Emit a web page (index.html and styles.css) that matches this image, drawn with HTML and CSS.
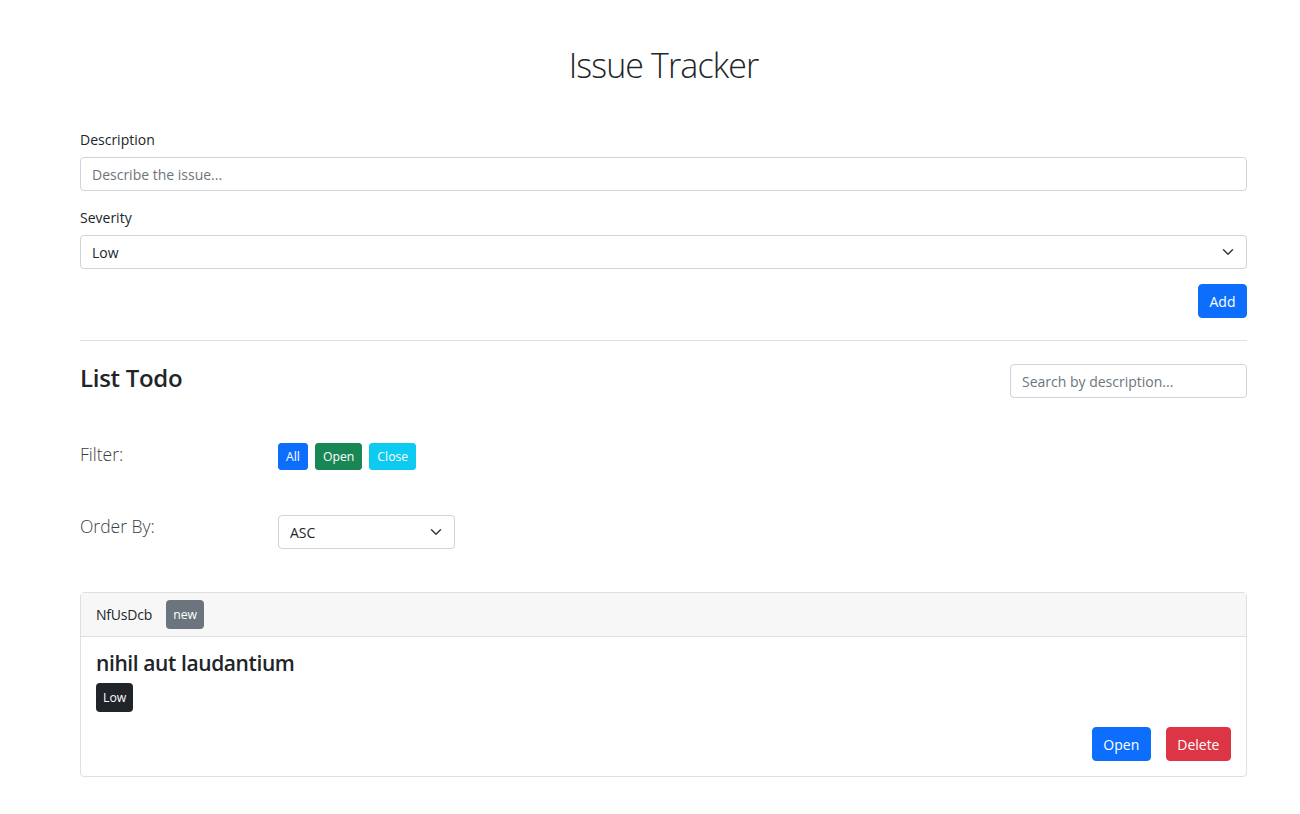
FILE: index.html
```html
<!DOCTYPE html>
<html lang="en">
<head>
<meta charset="utf-8">
<title>Issue Tracker</title>
<link rel="stylesheet" href="styles.css">
</head>
<body>
<div class="container">
  <h1 class="title">Issue Tracker</h1>

  <form class="issue-form">
    <div class="field">
      <label class="form-label" for="desc">Description</label>
      <input class="form-control" id="desc" type="text" placeholder="Describe the issue...">
    </div>
    <div class="field">
      <label class="form-label" for="sev">Severity</label>
      <div class="select-wrap">
        <select class="form-select" id="sev">
          <option>Low</option>
          <option>Medium</option>
          <option>High</option>
        </select>
        <svg class="chevron" viewBox="0 0 16 16" width="16" height="12"><path d="M2 5l6 6 6-6" fill="none" stroke="#343a40" stroke-width="2" stroke-linecap="round" stroke-linejoin="round"/></svg>
      </div>
    </div>
    <div class="form-actions">
      <button type="button" class="btn btn-primary">Add</button>
    </div>
  </form>

  <hr class="divider">

  <div class="list-head">
    <h3 class="list-title">List Todo</h3>
    <input class="form-control search" type="text" placeholder="Search by description...">
  </div>

  <div class="opt-row">
    <div class="opt-label">Filter:</div>
    <div class="opt-control filters">
      <button type="button" class="btn btn-sm btn-primary">All</button>
      <button type="button" class="btn btn-sm btn-success">Open</button>
      <button type="button" class="btn btn-sm btn-info">Close</button>
    </div>
  </div>

  <div class="opt-row">
    <div class="opt-label">Order By:</div>
    <div class="opt-control">
      <div class="select-wrap order">
        <select class="form-select">
          <option>ASC</option>
          <option>DESC</option>
        </select>
        <svg class="chevron" viewBox="0 0 16 16" width="16" height="12"><path d="M2 5l6 6 6-6" fill="none" stroke="#343a40" stroke-width="2" stroke-linecap="round" stroke-linejoin="round"/></svg>
      </div>
    </div>
  </div>

  <div class="card">
    <div class="card-header">
      <span class="issue-id">NfUsDcb</span>
      <span class="badge badge-secondary">new</span>
    </div>
    <div class="card-body">
      <h4 class="card-title">nihil aut laudantium</h4>
      <span class="badge badge-dark">Low</span>
      <div class="card-actions">
        <button type="button" class="btn btn-primary">Open</button>
        <button type="button" class="btn btn-danger">Delete</button>
      </div>
    </div>
  </div>
</div>
</body>
</html>
```

FILE: styles.css
```css
* { box-sizing: border-box; }

html { font-size: 14px; }

body {
  margin: 0;
  font-family: "Open Sans", "Noto Sans", sans-serif;
  font-size: 14px;
  line-height: 1.5;
  color: #212529;
  background: #fff;
}

.container {
  width: 1167px;
  margin-left: 80px;
  padding-top: 44px;
  padding-bottom: 38px;
}

.title {
  margin: 0 0 43px;
  text-align: center;
  font-size: 34px;
  font-weight: 300;
  line-height: 42px;
  letter-spacing: -0.9px;
}

.field { margin-bottom: 16px; }

.form-label {
  display: block;
  margin-bottom: 7px;
  font-size: 14px;
}

.form-control,
.form-select {
  display: block;
  width: 100%;
  height: 34px;
  padding: 5px 11px;
  font-family: inherit;
  font-size: 14px;
  color: #212529;
  background: #fff;
  border: 1px solid #ced4da;
  border-radius: 4px;
  outline: none;
}

.form-control::placeholder { color: #6c757d; }

.form-select {
  appearance: none;
  -webkit-appearance: none;
  padding-right: 36px;
}

.select-wrap { position: relative; }

.chevron {
  position: absolute;
  right: 11px;
  top: 11px;
  pointer-events: none;
}

.form-actions {
  display: flex;
  justify-content: flex-end;
  margin-top: -1px;
}

.btn {
  display: inline-block;
  font-family: inherit;
  font-size: 14px;
  line-height: 21px;
  padding: 5.5px 10.5px;
  border: 1px solid transparent;
  border-radius: 4px;
  color: #fff;
  cursor: pointer;
}

.btn-sm {
  font-size: 12.25px;
  line-height: 18px;
  padding: 3.5px 7px;
  border-radius: 3px;
}

.btn-primary { background: #0d6efd; border-color: #0d6efd; }
.btn-success { background: #198754; border-color: #198754; }
.btn-info { background: #0dcaf0; border-color: #0dcaf0; }
.btn-danger { background: #dc3545; border-color: #dc3545; }

.divider {
  margin: 22px 0 23px;
  border: 0;
  border-top: 1px solid #dfe0e1;
}

.list-head {
  display: flex;
  align-items: center;
  justify-content: space-between;
}

.list-title {
  margin: 0 0 5px;
  font-size: 24px;
  font-weight: 600;
  line-height: 1.2;
  letter-spacing: -0.3px;
}

.search { width: 237px; }

.opt-row {
  display: flex;
  align-items: flex-start;
  margin-top: 43px;
}

.opt-label {
  width: 198px;
  font-size: 17.5px;
  font-weight: 300;
  line-height: 26px;
  color: #3a3f44;
}

.filters {
  display: flex;
  gap: 7px;
  padding-top: 2px;
}

.order { width: 177px; padding-top: 2px; }
.order .chevron { top: 13px; }

.card {
  margin-top: 43px;
  border: 1px solid #dfdfdf;
  border-radius: 4px;
}

.card-header {
  display: flex;
  align-items: center;
  gap: 14px;
  padding: 7px 15px;
  background: #f7f7f7;
  border-bottom: 1px solid #dfdfdf;
}

.issue-id { font-size: 14px; letter-spacing: -0.2px; }

.badge {
  display: inline-block;
  font-size: 12.25px;
  line-height: 18px;
  padding: 5.5px 7px;
  color: #fff;
  border-radius: 4px;
}

.badge-secondary { background: #6c757d; }
.badge-dark { background: #212529; }

.card-body { padding: 14px 15px 15px; }

.card-title {
  margin: 0 0 7px;
  font-size: 21px;
  font-weight: 600;
  line-height: 25px;
  letter-spacing: -0.4px;
}

.card-actions {
  display: flex;
  justify-content: flex-end;
  gap: 15px;
  margin-top: 15px;
}
```
